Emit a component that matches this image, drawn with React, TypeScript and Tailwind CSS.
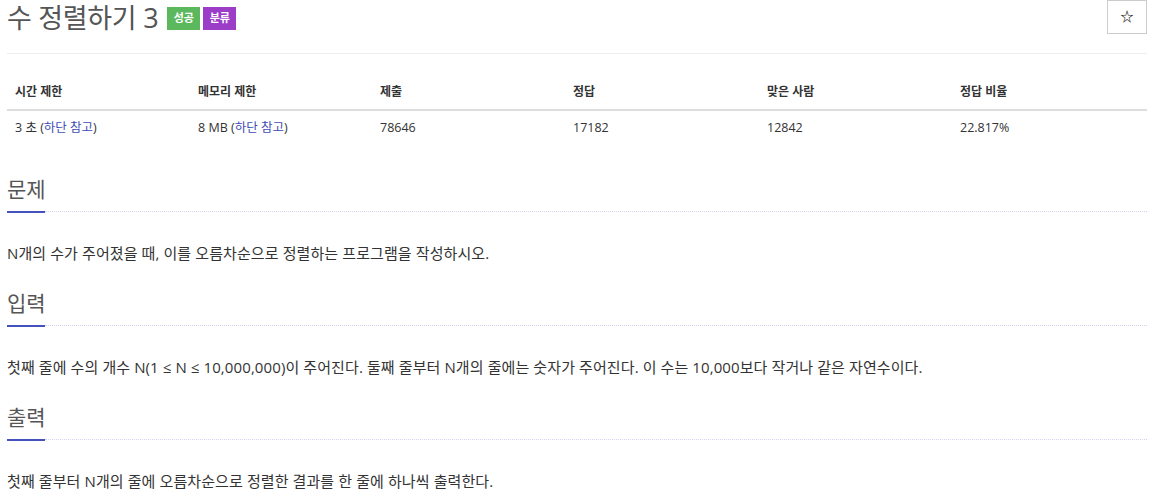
const font = { fontFamily: '"Open Sans", "Noto Sans CJK KR", sans-serif' };

const stats = [
  { label: '시간 제한', value: <>3 초 (<a className="text-[#3f4cb6]">하단 참고</a>)</> },
  { label: '메모리 제한', value: <>8 MB (<a className="text-[#3f4cb6]">하단 참고</a>)</> },
  { label: '제출', value: '78646' },
  { label: '정답', value: '17182' },
  { label: '맞은 사람', value: '12842' },
  { label: '정답 비율', value: '22.817%' },
];

const sections = [
  { title: '문제', body: 'N개의 수가 주어졌을 때, 이를 오름차순으로 정렬하는 프로그램을 작성하시오.' },
  {
    title: '입력',
    body: '첫째 줄에 수의 개수 N(1 ≤ N ≤ 10,000,000)이 주어진다. 둘째 줄부터 N개의 줄에는 숫자가 주어진다. 이 수는 10,000보다 작거나 같은 자연수이다.',
  },
  { title: '출력', body: '첫째 줄부터 N개의 줄에 오름차순으로 정렬한 결과를 한 줄에 하나씩 출력한다.' },
];

function Headline({ title }: { title: string }) {
  return (
    <div>
      <h2 className="text-[21px] leading-[30px] text-[#555] pb-[7px]">{title}</h2>
      <div className="flex items-start">
        <div className="w-[38px] h-[2px] bg-[#4452bd]" />
        <div className="flex-1 border-t border-dotted border-[#d0d4ee]" />
      </div>
    </div>
  );
}

export default function App() {
  return (
    <div className="bg-white w-[1154px] h-[504px] px-[7px] overflow-hidden text-[#333]" style={font}>
      {/* Header */}
      <div className="flex items-start justify-between h-[54px] border-b border-[#eee]">
        <div className="flex items-center gap-[3px] pt-[3px]">
          <h1 className="text-[27px] tracking-[-0.3px] leading-[30px] text-[#555] mr-[6px]">수 정렬하기 3</h1>
          <span className="bg-[#5cb85c] text-white text-[11px] font-bold h-[23px] w-[33px] flex items-center justify-center">
            성공
          </span>
          <span className="bg-[#9b3dc7] text-white text-[11px] font-bold h-[23px] w-[33px] flex items-center justify-center">
            분류
          </span>
        </div>
        <button className="w-[40px] h-[34px] border border-[#ccc] flex items-center justify-center text-[13px] font-bold text-[#222]">
          ☆
        </button>
      </div>

      {/* Stats table */}
      <div className="mt-[21px] grid grid-cols-[183px_182px_193px_194px_193px_1fr] text-[12px]">
        {stats.map((s) => (
          <div key={s.label} className="px-[8px] py-[8px] leading-[18px] font-bold border-b-2 border-[#ddd]">
            {s.label}
          </div>
        ))}
        {stats.map((s) => (
          <div key={s.label + 'v'} className="px-[8px] py-[8px] leading-[18px] text-[12.5px]">
            {s.value}
          </div>
        ))}
      </div>

      {/* Sections */}
      <div className="mt-[29px] flex flex-col gap-[25px]">
        {sections.map((s) => (
          <div key={s.title}>
            <Headline title={s.title} />
            <p className="mt-[30px] text-[15px] leading-[20px] tracking-[0.1px]">{s.body}</p>
          </div>
        ))}
      </div>
    </div>
  );
}
